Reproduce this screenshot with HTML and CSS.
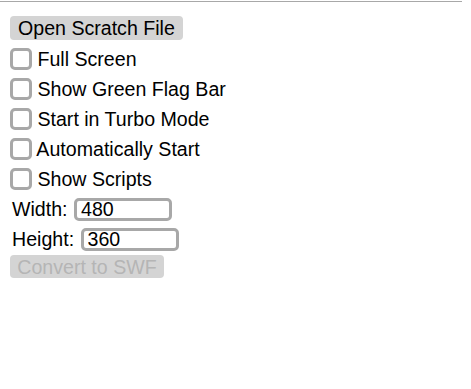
FILE: index.html
```html
<!DOCTYPE html>
<html lang="en">
<head>
  <meta charset="UTF-8">
  <title>Scratch to SWF</title>
  <link rel="stylesheet" href="styles.css">
</head>
<body>
  <div class="topline"></div>

  <div class="panel">
    <button class="open">Open Scratch File</button>
    <label class="row"><input type="checkbox" class="check"> Full Screen</label>
    <label class="row"><input type="checkbox" class="check"> Show Green Flag Bar</label>
    <label class="row"><input type="checkbox" class="check"> Start in Turbo Mode</label>
    <label class="row"><input type="checkbox" class="check"> Automatically Start</label>
    <label class="row"><input type="checkbox" class="check"> Show Scripts</label>
    <div class="row size">Width: <input class="num" value="480"></div>
    <div class="row size">Height: <input class="num" value="360"></div>
    <button class="convert" disabled>Convert to SWF</button>
  </div>
</body>
</html>
```

FILE: styles.css
```css
body {
  margin: 0;
  font-family: 'Liberation Sans', Arial, sans-serif;
  font-size: 19.6px;
  color: #000;
  background: #fff;
}

.topline {
  width: 462px;
  height: 1px;
  margin-top: 1px;
  background: #a8a8a8;
}

.panel {
  display: flex;
  flex-direction: column;
  align-items: flex-start;
  padding: 14px 0 0 10px;
}

button {
  font-family: inherit;
  font-size: 19.6px;
  border: none;
  border-radius: 4px;
  height: 24px;
  padding: 0 8px;
  line-height: 24px;
}

button.open {
  background: #d4d4d4;
  color: #000;
  margin-bottom: 4px;
}

button.convert {
  background: #d4d4d4;
  color: #b5b5b5;
  margin-top: 1px;
  width: 154px;
  height: 23px;
  padding: 0;
}

.row {
  display: flex;
  align-items: center;
  height: 30px;
  white-space: pre;
}

.check {
  appearance: none;
  -webkit-appearance: none;
  width: 22px;
  height: 22px;
  box-sizing: border-box;
  border: 3px solid #a8a8a8;
  border-radius: 5px;
  margin: 0;
  background: #fff;
}

.size {
  padding-left: 2px;
}

.num {
  font-family: inherit;
  font-size: 19.6px;
  width: 98px;
  height: 23px;
  box-sizing: border-box;
  border: 3px solid #a8a8a8;
  border-radius: 5px;
  padding: 0 0 0 4px;
  margin-left: 1px;
}
```
